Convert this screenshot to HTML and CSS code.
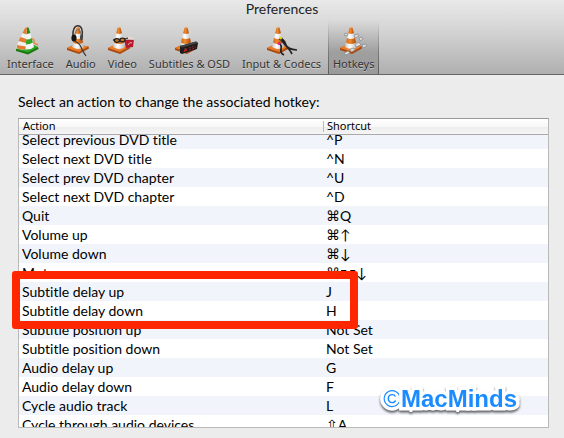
FILE: index.html
```
<!DOCTYPE html>
<html lang="en">

<head>
    <meta charset="UTF-8">
    <meta name="viewport" content="width=device-width, initial-scale=1.0">
    <title>Preferences</title>
    <link rel="stylesheet" href="styles.css">
</head>

<body>
    <svg class="defs" width="0" height="0" aria-hidden="true">
        <linearGradient id="orange" x1="0" x2="1">
            <stop offset="0" stop-color="#c9681c" />
            <stop offset=".4" stop-color="#f58a2c" />
            <stop offset="1" stop-color="#a84a0c" />
        </linearGradient>
        <linearGradient id="white" x1="0" x2="1">
            <stop offset="0" stop-color="#c8c8c8" />
            <stop offset=".4" stop-color="#ffffff" />
            <stop offset="1" stop-color="#b8b8b8" />
        </linearGradient>
        <symbol id="cone" viewBox="0 0 28 28">
            <path d="M0 21 L8 17.500 L21.500 19.500 L22 21.500 L12 27 L0 23z" fill="#a84a12" />
            <path d="M0 21 L8 17 L21.500 19.500 L12 25z" fill="#e97d2a" />
            <path d="M9.400 .8 Q11 -.4 12.600 .8 L17 20 Q11.500 24 5 20z" fill="url(#white)" />
            <path d="M9.400 .8 Q11 -.4 12.600 .8 L13.900 6.300 Q11 7.500 8.100 6.300z" fill="url(#orange)" />
            <path d="M7 11 Q11 13 15 11 L16 15.500 Q11 18.500 6 15.500z" fill="url(#orange)" />
        </symbol>
    </svg>

    <header class="titlebar">
        <h1 class="title">Preferences</h1>
        <nav class="toolbar">
            <button class="tool">
                <svg class="icon" viewBox="0 0 28 28">
                    <path d="M14 10 L18 13 L18 16 L22 18" fill="none" stroke="#e98a4c" stroke-width="1.500" />
                    <path d="M0 22 L22 20 L22.500 22 L12 27.500 L0 24z" fill="#17780f" />
                    <path d="M0 22 L18 18 L22 20 L12 25.500z" fill="#31a526" />
                    <path d="M11 .2 Q12.500 0 13 1.500 L18 20 Q15 23 9 22.500z" fill="#f5f5f5" />
                    <path d="M11 .2 Q12.500 0 13 1.500 L14.300 6 Q12.500 7 10 7z" fill="#258c1a" />
                    <path d="M10 12.500 Q14 12.500 15.600 11 L16.900 15.500 Q14 17.500 10 17.500z" fill="#31a526" />
                    <path d="M11 .2 L9 1 L1 18 Q0 20 1 21 Q5 23.500 9.500 22z" fill="#f2f0ee" />
                    <path d="M11 .2 L9 1 L6.500 6 L10.500 7.500z M4.500 10 L10.400 12 L10 16 L2.500 14z M1 18 L9.700 19.500 L9.500 22 Q5 23.500 1 21z" fill="#e37c2f" />
                </svg>
                Interface
            </button>
            <button class="tool">
                <svg class="icon" viewBox="0 0 28 28">
                    <use href="#cone" />
                    <path d="M6 10 C4 -5 18 -5 15 10" fill="none" stroke="#333" stroke-width="1.500" />
                    <path d="M8 8 C8 1 14 1 14 8" fill="none" stroke="#777" />
                    <ellipse cx="7" cy="11" rx="2.600" ry="3.500" fill="#161616" />
                    <ellipse cx="14.500" cy="10.500" rx="1.500" ry="3" fill="#444" />
                    <path d="M8 14 Q13 17 14 20 T19 29" fill="none" stroke="#3b3b3b" stroke-width="1.200" />
                </svg>
                Audio
            </button>
            <button class="tool">
                <svg class="icon" viewBox="0 0 28 28">
                    <use href="#cone" />
                    <path d="M16 13 L26 12 L25 20 L18 21z" fill="#b8182b" />
                    <path d="M20 18 Q22 14 24 16" fill="none" stroke="#e8b0b4" />
                    <path d="M16 12 L17 10 L19 11 L21 9 L23 11 L25 10 L26 13z" fill="#e4dcd2" />
                    <ellipse cx="9" cy="13.500" rx="2.500" ry="1.800" fill="#d17a26" stroke="#222" stroke-width="1.300" />
                    <ellipse cx="14.500" cy="13" rx="2.500" ry="1.800" fill="#d17a26" stroke="#222" stroke-width="1.300" />
                    <path d="M5 13 L7 13 M17 12 L20 11" stroke="#222" stroke-width="1.300" />
                </svg>
                Video
            </button>
            <button class="tool">
                <svg class="icon" viewBox="0 0 28 28">
                    <use href="#cone" />
                    <path d="M5 19 L21 14.500 L23 16 L22 22 L7 27 L5 26z" fill="#1c1c1c" />
                    <path d="M5 19 L21 14.500 L23 16 L7 20.500z" fill="#444" />
                    <path d="M9 25 L10.500 21 L12 24 M9.500 24 L12 23" fill="none" stroke="#c5262b" />
                    <path d="M14 21 L20 19 M14 23 L21 20.500" stroke="#872025" stroke-width="1.200" stroke-dasharray="2 1" />
                </svg>
                Subtitles &amp; OSD
            </button>
            <button class="tool">
                <svg class="icon" viewBox="0 0 28 28">
                    <use href="#cone" />
                    <path d="M14 11 Q18 14 19 18 T30 23 M14 12 Q17 17 20 20 T25 27 M12 16 Q15 18 14 22 T17 28" fill="none" stroke="#222" stroke-width="1.700" />
                    <circle cx="13.500" cy="11" r="1.500" fill="#e8d921" />
                    <circle cx="12" cy="16.500" r="1.600" fill="#e52484" />
                    <path d="M12 12 L15 14" stroke="#333" />
                </svg>
                Input &amp; Codecs
            </button>
            <button class="tool active" aria-pressed="true">
                <svg class="icon" viewBox="0 0 28 28">
                    <use href="#cone" />
                    <g fill="#ddd" stroke="#858585" stroke-width=".7">
                        <path d="M4 7 l3 -1 l1 2 l-3 1z" />
                        <path d="M14 8 l4 -1 l1 2 l-4 2z" />
                        <path d="M19 11 l3 -1 l1 2 l-3 2z" />
                        <path d="M15 17 l4 -2 l2 3 l-5 2z" />
                        <path d="M22 18 l4 -1 l1 2 l-4 2z" />
                        <path d="M10 22 l4 -1 l1 2 l-4 2z" />
                        <path d="M4 26 l4 -2 l2 2 l-4 2z" />
                    </g>
                </svg>
                Hotkeys
            </button>
        </nav>
    </header>

    <main class="content">
        <p class="hint" id="hint">Select an action to change the associated hotkey:</p>
        <div class="panel">
            <div class="list">
                <table class="hotkeys" aria-labelledby="hint">
                    <thead>
                        <tr><th>Action</th><th>Shortcut</th></tr>
                    </thead>
                    <tbody>
                        <tr><td>Select previous DVD title</td><td>^P</td></tr>
                        <tr><td>Select next DVD title</td><td>^N</td></tr>
                        <tr><td>Select prev DVD chapter</td><td>^U</td></tr>
                        <tr><td>Select next DVD chapter</td><td>^D</td></tr>
                        <tr><td>Quit</td><td>⌘Q</td></tr>
                        <tr><td>Volume up</td><td>⌘↑</td></tr>
                        <tr><td>Volume down</td><td>⌘↓</td></tr>
                        <tr><td>Mute</td><td>⌘⌥↓</td></tr>
                        <tr><td>Subtitle delay up</td><td>J</td></tr>
                        <tr><td>Subtitle delay down</td><td>H</td></tr>
                        <tr><td>Subtitle position up</td><td>Not Set</td></tr>
                        <tr><td>Subtitle position down</td><td>Not Set</td></tr>
                        <tr><td>Audio delay up</td><td>G</td></tr>
                        <tr><td>Audio delay down</td><td>F</td></tr>
                        <tr><td>Cycle audio track</td><td>L</td></tr>
                        <tr><td>Cycle through audio devices</td><td>⇧A</td></tr>
                    </tbody>
                </table>
            </div>
            <div class="highlight"></div>
            <div class="watermark"><span class="copy">©</span>MacMinds</div>
        </div>
    </main>
</body>

</html>
```

FILE: styles.css
```
body {
    margin: 0;
    background: #ececec;
    color: #000;
    font-family: Lato, "Noto Sans", "DejaVu Sans", sans-serif;
    font-size: 14px;
    font-variant-ligatures: none;
}

.defs {
    position: absolute;
}

.titlebar {
    background: linear-gradient(#e9e9e9, #d2d2d2 45%, #afafaf);
    border-bottom: 1px solid #666;
}

.title {
    margin: 0;
    padding-bottom: 2px;
    font-size: 14px;
    font-weight: normal;
    line-height: 18px;
    text-align: center;
    color: #222;
}

.toolbar {
    display: flex;
    gap: 2px;
    padding-left: 2px;
}

.tool {
    display: flex;
    flex-direction: column;
    align-items: center;
    padding: 7px 5px 1px;
    border: 0;
    background: none;
    color: #333;
    font-family: "Noto Sans", "DejaVu Sans", sans-serif;
    font-size: 11px;
    line-height: 18px;
    white-space: nowrap;
    text-shadow: 0 1px 0 rgba(255, 255, 255, .4);
}

.tool.active {
    background:
        linear-gradient(rgba(0, 0, 0, 0), rgba(0, 0, 0, .4)) left / 1px 100% no-repeat,
        linear-gradient(rgba(0, 0, 0, 0), rgba(0, 0, 0, .4)) right / 1px 100% no-repeat,
        linear-gradient(rgba(0, 0, 0, 0), rgba(0, 0, 0, .18) 60%, rgba(0, 0, 0, .12));
}

.icon {
    width: 28px;
    height: 28px;
    overflow: visible;
}

.content {
    padding: 18px 15px 9px 18px;
}

.hint {
    margin: 0;
    padding-bottom: 7px;
    line-height: 18px;
}

.panel {
    position: relative;
}

.list {
    box-sizing: border-box;
    height: 310px;
    overflow: hidden;
    border: 1px solid #b9b9b9;
    border-top-color: #999;
    background: #fff;
}

.hotkeys,
.hotkeys tbody {
    display: block;
}

.hotkeys thead {
    display: block;
    position: relative;
    z-index: 1;
    background: linear-gradient(#fff, #f8f8f8 50%, #ededed 51%, #f5f5f5);
    border-bottom: 1px solid #aaa;
}

/* list is scrolled a few pixels under the header */
.hotkeys tbody {
    margin-top: -5px;
}

.hotkeys tr {
    display: grid;
    grid-template-columns: 304px 1fr;
}

.hotkeys th {
    padding: 0 4px 1px;
    font-family: "Noto Sans", "DejaVu Sans", sans-serif;
    font-size: 11px;
    font-weight: normal;
    line-height: 14px;
    text-align: left;
}

.hotkeys th + th {
    background: linear-gradient(#bbb, #bbb) 0 2px / 1px 11px no-repeat;
}

.hotkeys td {
    padding: 0 3px;
    line-height: 19px;
    white-space: nowrap;
}

.hotkeys tbody tr:nth-child(odd) {
    background: #f1f5fb;
}

/* annotations drawn over the list */
.highlight {
    position: absolute;
    z-index: 2;
    top: 153px;
    left: -6px;
    box-sizing: border-box;
    width: 346px;
    height: 58px;
    border: 8px solid #ff2600;
    border-radius: 3px;
}

.watermark {
    position: absolute;
    z-index: 2;
    right: 32px;
    bottom: 16px;
    color: #1a8cff;
    font-family: "Liberation Sans", Arial, sans-serif;
    font-size: 24px;
    font-weight: bold;
    line-height: 26px;
    -webkit-text-stroke: 7px #fff;
    paint-order: stroke fill;
    stroke-linejoin: round;
    filter: drop-shadow(0 2px 1px rgba(0, 0, 0, .6));
}

.copy {
    font-weight: normal;
}
```
